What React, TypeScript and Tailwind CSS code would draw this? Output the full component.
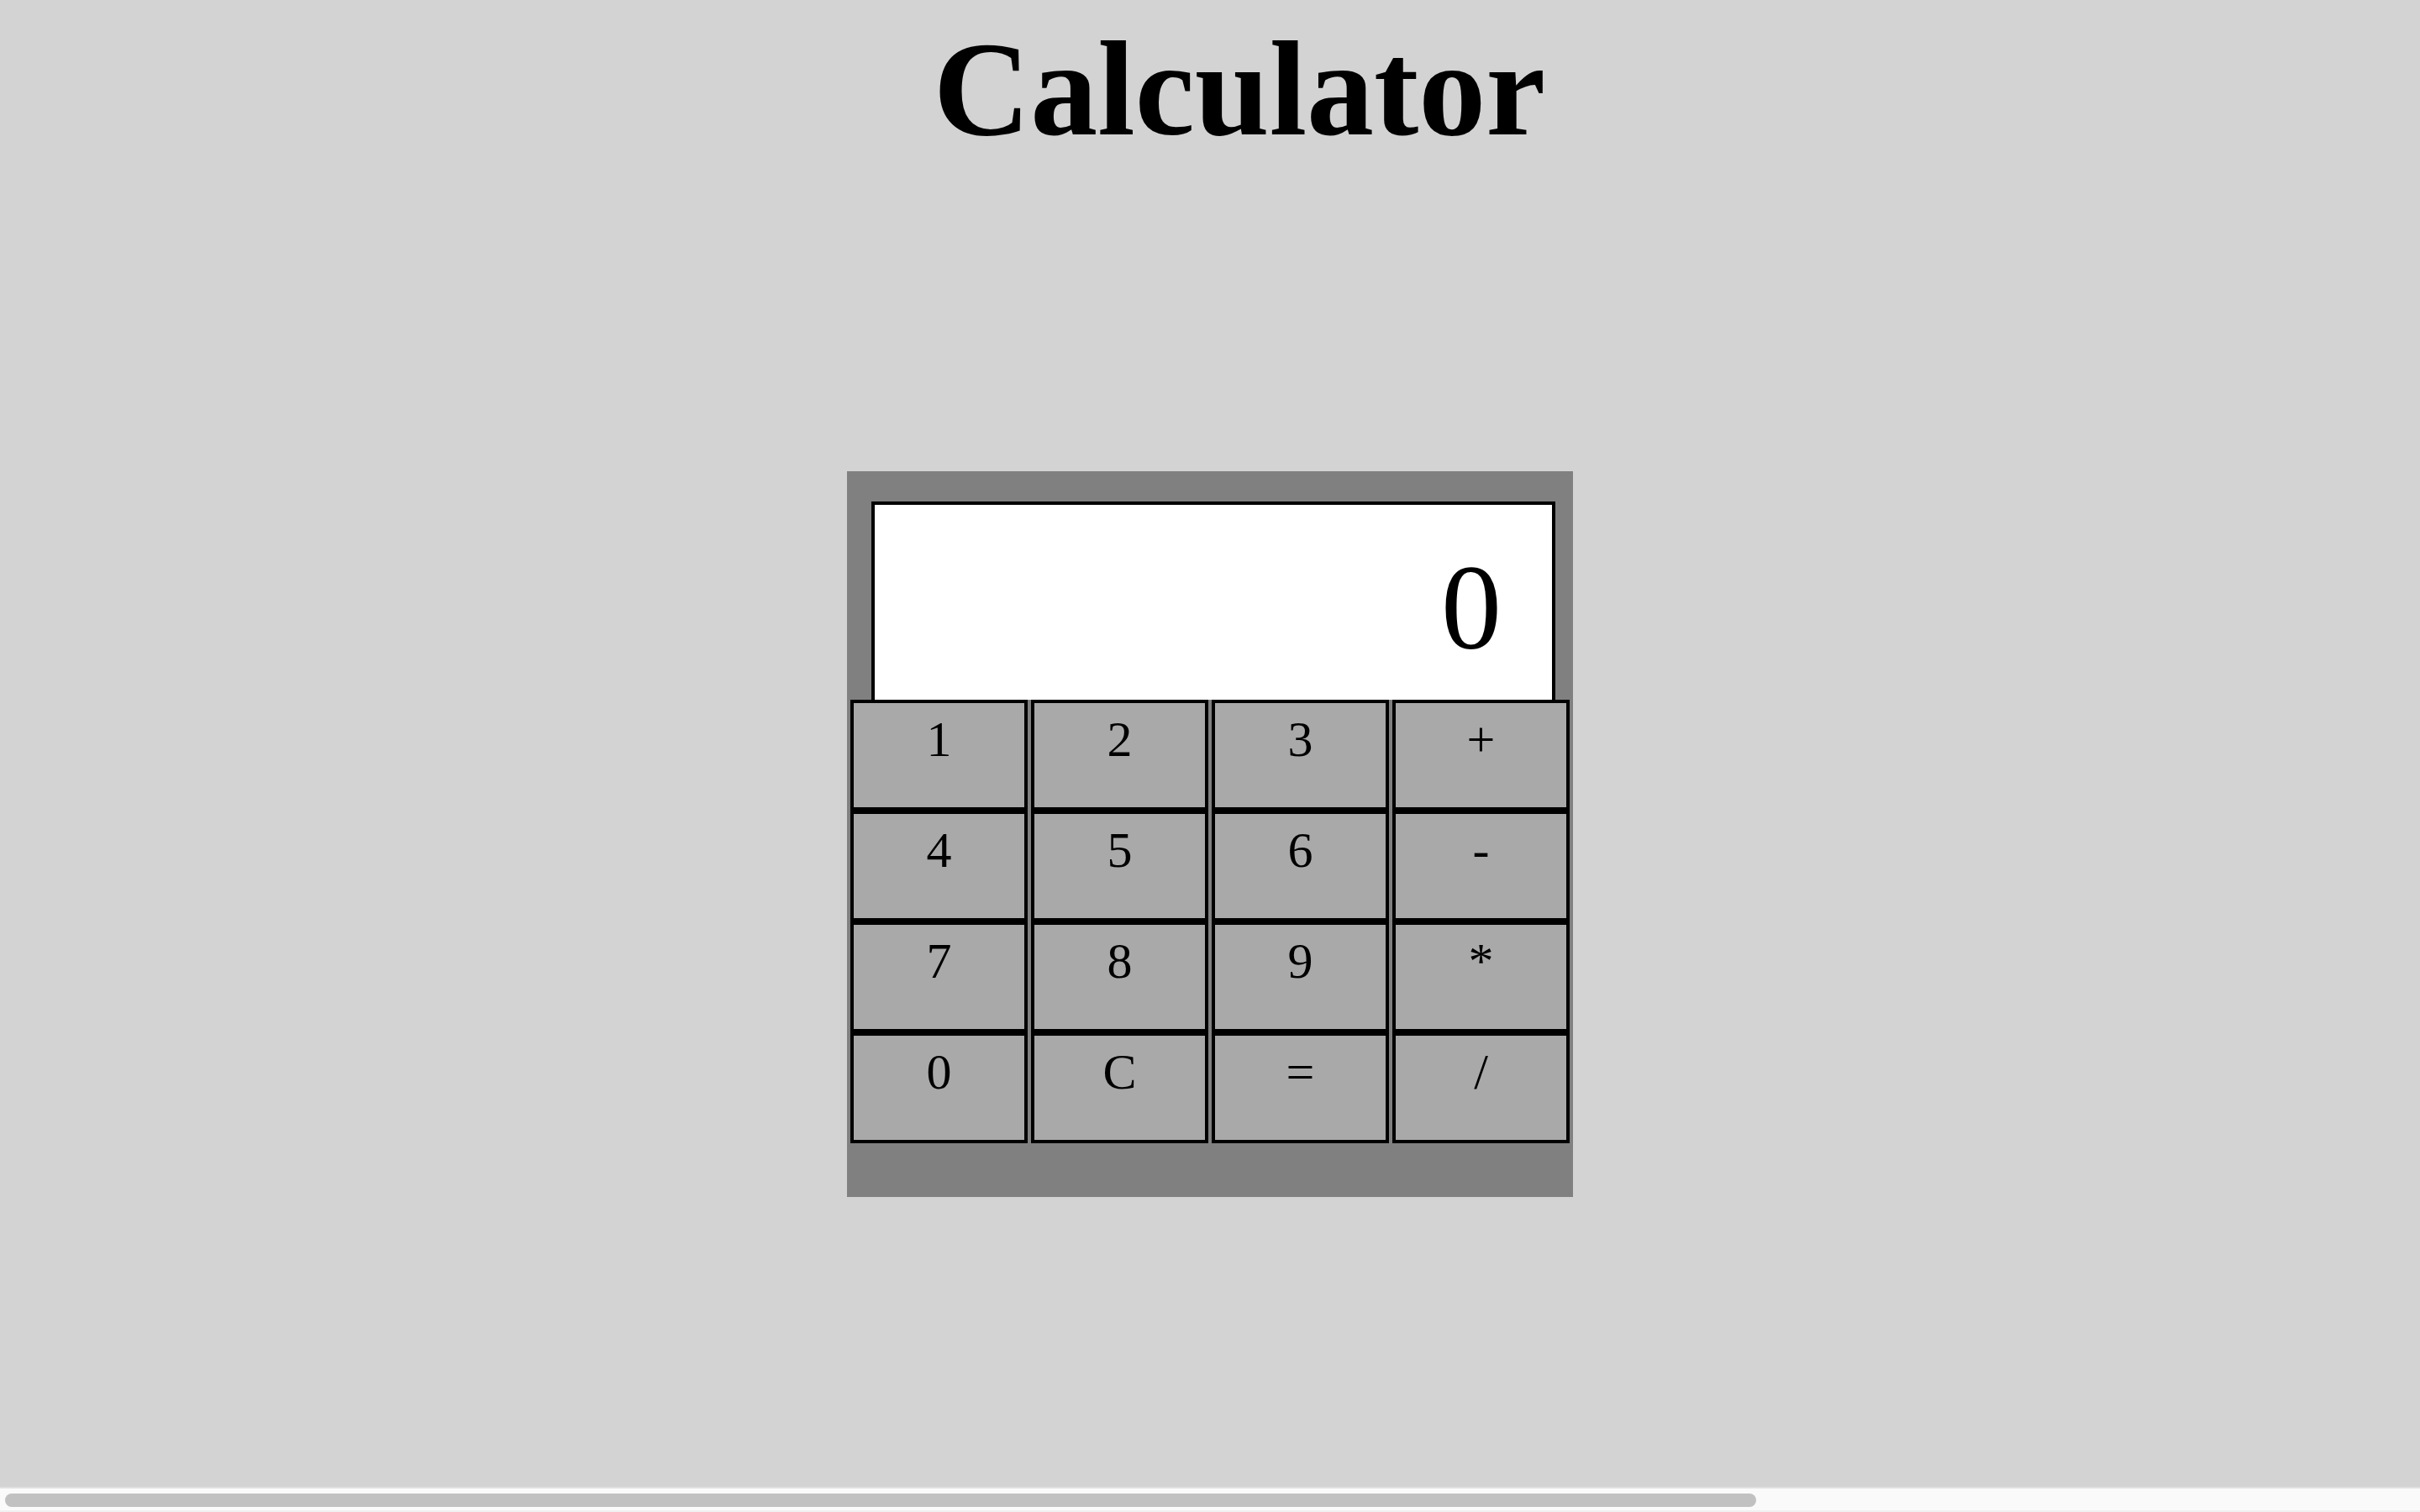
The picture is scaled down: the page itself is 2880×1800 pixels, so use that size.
import { useState } from 'react';

const keys = ['1', '2', '3', '+', '4', '5', '6', '-', '7', '8', '9', '*', '0', 'C', '=', '/'];

export default function App() {
  const [display, setDisplay] = useState('0');

  const press = (key: string) => {
    if (key === 'C') {
      setDisplay('0');
    } else if (key === '=') {
      try {
        // eslint-disable-next-line no-new-func
        const result = Function(`return (${display})`)();
        setDisplay(String(result));
      } catch {
        setDisplay('Error');
      }
    } else {
      setDisplay(display === '0' || display === 'Error' ? key : display + key);
    }
  };

  return (
    <div className="min-h-screen bg-[#d3d3d3] font-['Liberation_Serif',serif] text-black">
      <h1 className="pt-[14px] pl-[70px] text-center text-[160px] font-bold leading-[normal]">Calculator</h1>

      <div className="mx-auto mt-[362px] h-[864px] w-[864px] bg-[#808080] px-[4px] pt-[36px]">
        <div className="ml-[25px] flex h-[236px] w-[814px] items-start justify-end border-4 border-b-0 border-black bg-white pt-[40px] pr-[60px] text-[144px] leading-[normal]">
          {display}
        </div>
        <div className="grid grid-cols-4 gap-x-[4px]">
          {keys.map(key => (
            <button
              key={key}
              onClick={() => press(key)}
              className="flex h-[132px] items-start justify-center border-4 border-black bg-[#a9a9a9] pt-[9px] text-[60px] leading-[normal]"
            >
              {key}
            </button>
          ))}
        </div>
      </div>

      {/* horizontal scrollbar */}
      <div className="fixed bottom-0 left-0 right-0 h-[30px] border-t-2 border-b-2 border-t-[#e0e0e0] border-b-[#f0f0f0] bg-[#fafafa]">
        <div className="ml-[6px] mt-[6px] h-[16px] w-[2084px] rounded-full bg-[#c1c1c1]" />
      </div>
    </div>
  );
}
